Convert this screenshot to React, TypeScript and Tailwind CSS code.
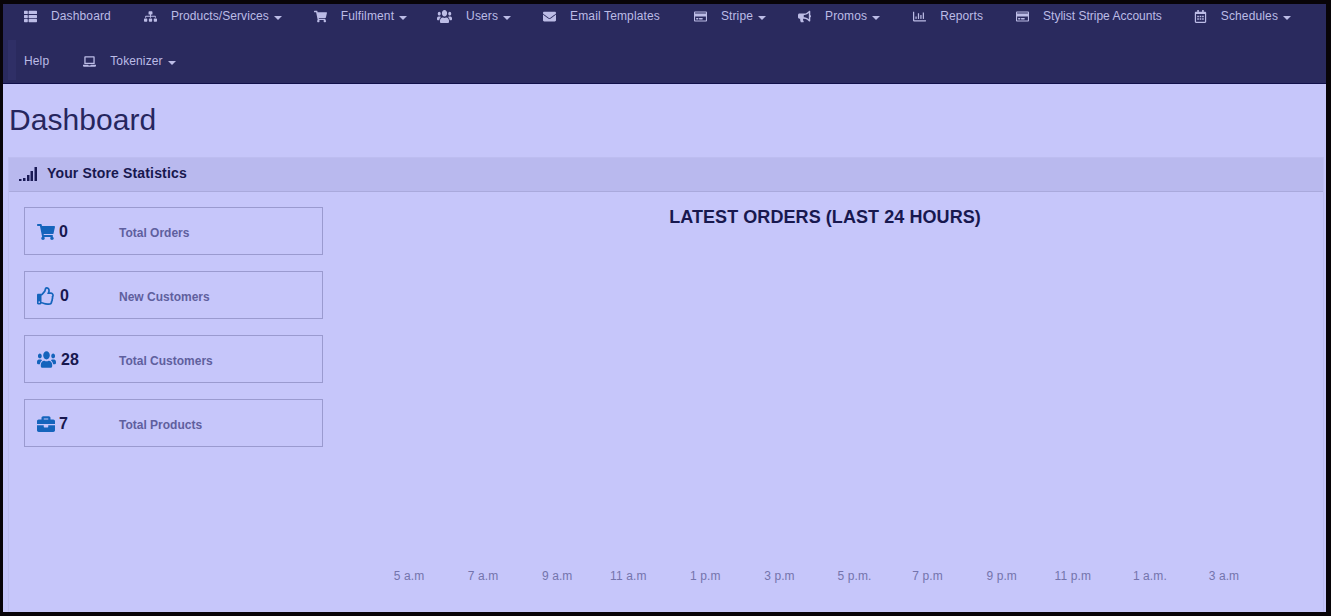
import React from "react";
import {
  FaThList, FaSitemap, FaShoppingCart, FaUsers, FaEnvelope, FaRegCreditCard, FaBullhorn,
  FaRegChartBar, FaRegCalendarAlt, FaLaptop, FaRegThumbsUp, FaBriefcase,
} from "react-icons/fa";

type Item = {
  label: string;
  Icon?: React.ComponentType<{ className?: string }>;
  caret?: boolean;
  cls?: string;
  track?: string;
  icon?: string;
};

const row1: Item[] = [
  { label: "Dashboard", Icon: FaThList, cls: "mr-px" },
  { label: "Products/Services", Icon: FaSitemap, caret: true, track: "tracking-[0.07px]" },
  { label: "Fulfilment", Icon: FaShoppingCart, caret: true },
  { label: "Users", Icon: FaUsers, caret: true, icon: "-ml-[2px] mr-[2px] h-[15px] w-[15px] scale-y-125" },
  { label: "Email Templates", Icon: FaEnvelope, cls: "mr-[2px]" },
  { label: "Stripe", Icon: FaRegCreditCard, caret: true },
  { label: "Promos", Icon: FaBullhorn, caret: true, cls: "mr-px" },
  { label: "Reports", Icon: FaRegChartBar, cls: "mr-px" },
  { label: "Stylist Stripe Accounts", Icon: FaRegCreditCard, track: "tracking-[0px]" },
  { label: "Schedules", Icon: FaRegCalendarAlt, caret: true },
];

const stats = [
  { Icon: FaShoppingCart, value: "0", label: "Total Orders", icon: "mr-[4px] h-[18px] w-[18px]" },
  { Icon: FaRegThumbsUp, value: "0", label: "New Customers", icon: "mr-[5px] h-[18px] w-[18px]" },
  { Icon: FaUsers, value: "28", label: "Total Customers", icon: "mr-[5px] h-[19px] w-[19px] scale-y-125" },
  { Icon: FaBriefcase, value: "7", label: "Total Products", icon: "mr-[4px] h-[18px] w-[18px]" },
];

const hours = [
  { t: "5 a.m", cls: "" },
  { t: "7 a.m", cls: "" },
  { t: "9 a.m", cls: "" },
  { t: "11 a.m", cls: "mr-[6px]" },
  { t: "1 p.m", cls: "" },
  { t: "3 p.m", cls: "" },
  { t: "5 p.m.", cls: "ml-[2px]" },
  { t: "7 p.m", cls: "" },
  { t: "9 p.m", cls: "" },
  { t: "11 p.m", cls: "mr-[6px]" },
  { t: "1 a.m.", cls: "" },
  { t: "3 a.m", cls: "" },
];

function NavItem({ item }: { item: Item }) {
  const { label, Icon, caret, cls = "", track = "tracking-[0.13px]", icon = "h-[13px] w-[13px]" } = item;
  return (
    <a className={`flex h-6 items-center px-4 text-[12px] text-[#bcbce6] ${track} ${cls}`}>
      {Icon && (
        <span className="w-[27px] shrink-0">
          <Icon className={icon} />
        </span>
      )}
      <span>{label}</span>
      {caret && <span className="ml-[5px] mt-[3px] h-0 w-0 border-x-4 border-t-4 border-x-transparent border-t-[#bcbce6]" />}
    </a>
  );
}

function SignalIcon() {
  return (
    <svg width="18" height="16" viewBox="0 0 18 16" className="fill-[#1a1a55]">
      <rect x="0" y="13" width="2.5" height="2" />
      <rect x="4" y="12" width="2.5" height="3" />
      <rect x="8" y="9" width="2.5" height="6" />
      <rect x="11.5" y="5" width="2.5" height="10" />
      <rect x="15.5" y="1" width="2.5" height="14" />
    </svg>
  );
}

export default function App() {
  return (
    <div className="h-[616px] w-[1331px] overflow-hidden bg-[#080408] pb-1 pl-[3px] pr-[5px] pt-1 font-['Liberation_Sans',Arial,sans-serif]">
      <div className="flex h-full flex-col bg-[#c6c6fa]">
        <nav className="h-20 shrink-0 border-b border-[#10104a] bg-[#2a2a5e] pl-[5px]">
          <div className="flex">
            {row1.map((item) => (
              <NavItem key={item.label} item={item} />
            ))}
          </div>
          <div className="mt-3 flex h-[42px] items-center">
            <span className="h-10 w-2 self-start bg-[#2f2f66]" />
            <NavItem item={{ label: "Help", cls: "-ml-2 mr-[2px]" }} />
            <NavItem item={{ label: "Tokenizer", Icon: FaLaptop, caret: true }} />
          </div>
        </nav>

        <main className="flex min-h-0 flex-1 flex-col pl-[5px] pr-[2px]">
          <h1 className="ml-px mt-[19px] text-[30px] leading-[34px] tracking-[0.05px] text-[#26265e]">Dashboard</h1>
          <section className="mt-[20px] flex min-h-0 flex-1 flex-col border-x border-t border-[#bdbdf0]">
            <header className="flex h-[34px] items-center gap-[10px] border-b border-[#a9a9dc] bg-[#b9b9ee] pb-[2px] pl-[10px]">
              <SignalIcon />
              <h2 className="text-[14px] font-bold tracking-[0.15px] text-[#18184f]">Your Store Statistics</h2>
            </header>
            <div className="flex flex-1 pl-[15px]">
              <div className="mt-[15px] flex w-[299px] shrink-0 flex-col gap-4">
                {stats.map(({ Icon, value, label, icon }) => (
                  <div key={label} className="flex h-12 items-center border border-[#9a9acf] pl-3">
                    <span className="mt-px flex w-[82px] items-center text-[16px] font-bold text-[#18184f]">
                      <Icon className={`text-[#1464bc] ${icon}`} />
                      {value}
                    </span>
                    <span className="mt-[3px] text-[12px] font-bold text-[#5f5f9e]">{label}</span>
                  </div>
                ))}
              </div>
              <div className="flex flex-1 flex-col pb-[27px] pl-[14px] pr-[14px]">
                <h3 className="mt-[15px] pl-[4px] text-center text-[18px] font-bold leading-[20px] tracking-[0.07px] text-[#18184f]">LATEST ORDERS (LAST 24 HOURS)</h3>
                <div className="mt-auto grid grid-cols-12 pl-[35px] pr-[48px] text-[12px] tracking-[0.1px] text-[#7474ac]">
                  {hours.map((h) => (
                    <span key={h.t} className={`text-center ${h.cls}`}>{h.t}</span>
                  ))}
                </div>
              </div>
            </div>
          </section>
        </main>
      </div>
    </div>
  );
}
